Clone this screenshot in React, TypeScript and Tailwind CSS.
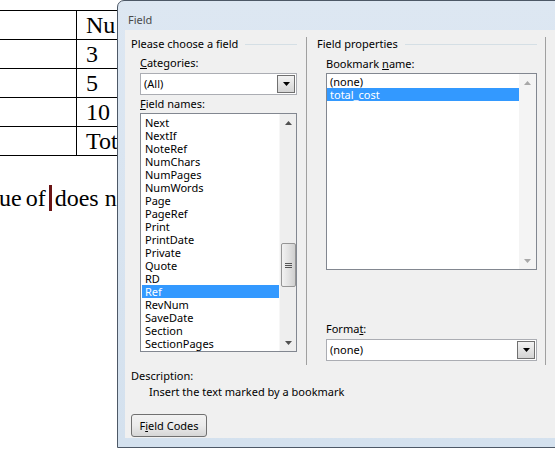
import React from 'react'

const ui = { fontFamily: '"Noto Sans", "Open Sans", sans-serif' }
const serif = { fontFamily: '"Liberation Serif", "Times New Roman", serif' }

const fieldNames = [
  'Next', 'NextIf', 'NoteRef', 'NumChars', 'NumPages', 'NumWords', 'Page', 'PageRef', 'Print',
  'PrintDate', 'Private', 'Quote', 'RD', 'Ref', 'RevNum', 'SaveDate', 'Section', 'SectionPages',
]

function Arrow({ up, color }: { up?: boolean; color: string }) {
  return (
    <svg width="7" height="4" viewBox="0 0 7 4">
      <polygon points={up ? '0,4 7,4 3.5,0' : '0,0 7,0 3.5,4'} fill={color} />
    </svg>
  )
}

function DropButton() {
  return (
    <div className="w-[18px] h-full border border-[#707070] bg-gradient-to-b from-[#f3f3f3] to-[#d4d4d4] flex items-center justify-center">
      <Arrow color="#000" />
    </div>
  )
}

function Combo({ value, width }: { value: string; width: string }) {
  return (
    <div className={`${width} h-[22px] border border-[#abadb3] bg-white flex items-stretch`}>
      <div className="flex-1 pl-[3px] leading-[20px] text-black">{value}</div>
      <div className="p-px">
        <DropButton />
      </div>
    </div>
  )
}

export default function App() {
  return (
    <div className="relative w-[555px] h-[453px] overflow-hidden bg-white">
      {/* document behind the dialog */}
      <div style={serif} className="text-[24px] text-black">
        <div className="mt-[10px] border-t border-black">
          {['Nu', '3', '5', '10', 'Tot'].map(t => (
            <div key={t} className="flex h-[29px] border-b border-black">
              <div className="w-[77px] border-r border-black" />
              <div className="pl-[9px] leading-[28px]">{t}</div>
            </div>
          ))}
        </div>
        <div className="mt-[28px] flex items-center leading-[28px] whitespace-pre">
          <span className="ml-[-1px] [word-spacing:-2px]">ue of</span>
          <span className="ml-[3px] w-[3px] h-[26px] bg-[#6b1515]" />
          <span className="ml-[3px]">does not</span>
        </div>
      </div>

      {/* dialog */}
      <div
        style={ui}
        className="absolute left-[117px] top-0 w-[480px] h-[448px] rounded-t-[7px] border border-[#4d5866] bg-gradient-to-b from-[#dde7f2] to-[#d4e1ee]"
      >
        <div className="h-[29px] pl-[10px] pt-[11px] text-[11px] leading-[15px] text-[#4a4a4a]">Field</div>

        <div className="ml-[7px] h-[408px] bg-[#f0f0f0] text-[11px] text-black">
          <div className="flex pl-[6px] pt-[7px]">
            {/* left column */}
            <div className="w-[175px] h-[328px]">
              <div className="w-[166px] flex items-center leading-[14px]">
                <span>Please choose a field</span>
                <div className="flex-1 ml-[7px] h-px bg-[#d5dfe5]" />
              </div>
              <div className="pl-[9px]">
                <div className="mt-[5px] leading-[14px]">
                  <span className="underline">C</span>ategories:
                </div>
                <div className="mt-[3px]">
                  <Combo value="(All)" width="w-[157px]" />
                </div>
                <div className="mt-[2px] leading-[14px]">
                  <span className="underline">F</span>ield names:
                </div>
                <div className="mt-[2px] w-[157px] h-[239px] border border-[#828790] bg-white flex">
                  <div className="flex-1 pt-[2px] pl-px">
                    {fieldNames.map(n => (
                      <div
                        key={n}
                        className={`h-[13px] leading-[13px] pl-[3px] ${n === 'Ref' ? 'bg-[#3399ff] text-white' : ''}`}
                      >
                        {n}
                      </div>
                    ))}
                  </div>
                  <div className="w-[17px] bg-[#eeeeee] border-l border-[#f7f7f7] flex flex-col items-center">
                    <div className="h-[17px] flex items-center justify-center">
                      <Arrow up color="#505050" />
                    </div>
                    <div className="flex-1 w-full">
                      <div className="mt-[112px] mx-auto w-[15px] h-[44px] rounded-[2px] border border-[#959595] bg-gradient-to-r from-[#f2f2f2] via-[#e2e2e2] to-[#cfcfcf] flex flex-col items-center justify-center gap-[1px]">
                        <div className="w-[7px] h-px bg-[#555]" />
                        <div className="w-[7px] h-px bg-[#555]" />
                        <div className="w-[7px] h-px bg-[#555]" />
                      </div>
                    </div>
                    <div className="h-[17px] flex items-center justify-center">
                      <Arrow color="#505050" />
                    </div>
                  </div>
                </div>
              </div>
            </div>

            {/* right column */}
            <div className="w-[239px] h-[328px] border-l border-[#a0a0a0] pl-[10px] flex flex-col">
              <div className="w-[220px] flex items-center leading-[14px]">
                <span>Field properties</span>
                <div className="flex-1 ml-[7px] h-px bg-[#d5dfe5]" />
              </div>
              <div className="pl-[9px] flex-1 flex flex-col">
                <div className="mt-[6px] leading-[14px]">
                  Bookmark <span className="underline">n</span>ame:
                </div>
                <div className="mt-[2px] w-[211px] h-[197px] border border-[#828790] bg-white flex">
                  <div className="flex-1 pt-[1px]">
                    <div className="h-[13px] leading-[13px] pl-[3px]">(none)</div>
                    <div className="h-[13px] leading-[13px] pl-[3px] bg-[#3399ff] text-white">total_cost</div>
                  </div>
                  <div className="w-[17px] bg-[#f4f4f4] flex flex-col items-center justify-between">
                    <div className="h-[17px] flex items-center justify-center">
                      <Arrow up color="#a8a8a8" />
                    </div>
                    <div className="h-[17px] flex items-center justify-center">
                      <Arrow color="#a8a8a8" />
                    </div>
                  </div>
                </div>
                <div className="flex-1" />
                <div className="leading-[14px]">
                  Forma<span className="underline">t</span>:
                </div>
                <div className="mt-[3px] mb-[4px]">
                  <Combo value="(none)" width="w-[211px]" />
                </div>
              </div>
            </div>
            <div className="h-[328px] border-l border-[#a0a0a0]" />
          </div>

          <div className="pl-[6px]">
            <div className="mt-[4px] leading-[14px]">Description:</div>
            <div className="mt-[2px] pl-[18px] leading-[14px]">Insert the text marked by a bookmark</div>
            <button className="mt-[15px] w-[76px] h-[23px] rounded-[3px] border border-[#707070] bg-gradient-to-b from-[#f2f2f2] via-[#ebebeb] to-[#d6d6d6] text-[11px] leading-[20px]">
              F<span className="underline">i</span>eld Codes
            </button>
          </div>
        </div>
      </div>
    </div>
  )
}
